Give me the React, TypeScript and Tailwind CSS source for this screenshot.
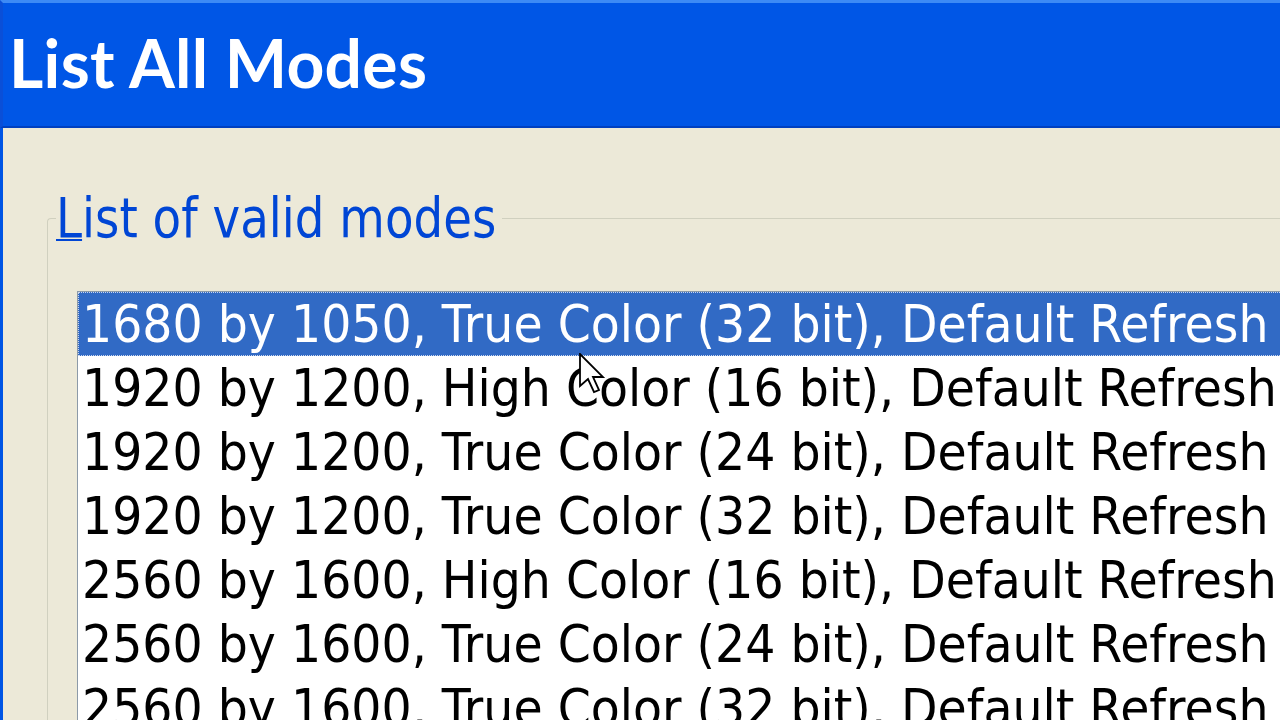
import React from 'react';

const modes = [
  '1680 by 1050, True Color (32 bit), Default Refresh',
  '1920 by 1200, High Color (16 bit), Default Refresh',
  '1920 by 1200, True Color (24 bit), Default Refresh',
  '1920 by 1200, True Color (32 bit), Default Refresh',
  '2560 by 1600, High Color (16 bit), Default Refresh',
  '2560 by 1600, True Color (24 bit), Default Refresh',
  '2560 by 1600, True Color (32 bit), Default Refresh',
];

const tahoma = { fontFamily: 'Tahoma, "DejaVu Sans", sans-serif' };

const Cursor = () => (
  <svg width="27" height="42" viewBox="-0.5 -0.5 13.5 21" className="absolute left-[579px] top-[353px]">
    <path d="M0 0 L0 16 L4 12.5 L7 19 L9.5 18 L6.5 11.5 L11.5 11.5 Z" fill="white" stroke="black" strokeWidth="0.9" strokeLinejoin="miter" />
  </svg>
);

export default function App() {
  return (
    <div className="relative w-[1280px] h-[720px] overflow-hidden flex flex-col bg-[#ece9d8]">
      <div className="h-[128px] shrink-0 flex items-center pl-[6px] bg-[#0056e6] border-t-[3px] border-t-[#3d8af5] border-b-[2px] border-b-[#0040c0] border-l-[3px] border-l-[#0a4fd8]">
        <h1 className="text-white font-bold text-[66px] leading-none pb-[4px] tracking-[0.3px]" style={{ fontFamily: 'Lato, "Open Sans", sans-serif' }}>
          List All Modes
        </h1>
      </div>
      <div className="flex-1 border-l-[3px] border-[#0055e5] pl-[44px]">
        <fieldset className="mt-[58px] border-t border-l border-[#d0d0bf] rounded-tl-[4px] pt-[41px]">
          <legend className="ml-[8px] w-[446px] text-[#0046d5] text-[55px] leading-[64px] whitespace-nowrap" style={tahoma}>
            <span className="inline-block origin-left scale-x-[0.85]">
              <span className="underline underline-offset-[2px] decoration-[2px]">L</span>ist of valid modes
            </span>
          </legend>
          <div className="ml-[29px] border border-[#8c9aa8] bg-white" style={tahoma}>
            {modes.map((m, i) => (
              <div
                key={i}
                className={
                  i === 0
                    ? 'h-[64px] leading-[62px] pl-[3px] text-[52px] whitespace-nowrap bg-[#316ac5] text-white border border-dotted border-[#c9d6ee]'
                    : 'h-[64px] leading-[64px] pl-[4px] text-[52px] whitespace-nowrap text-black'
                }
              >
                <span className="inline-block origin-left scale-x-[0.912]">{m}</span>
              </div>
            ))}
          </div>
        </fieldset>
      </div>
      <Cursor />
    </div>
  );
}
